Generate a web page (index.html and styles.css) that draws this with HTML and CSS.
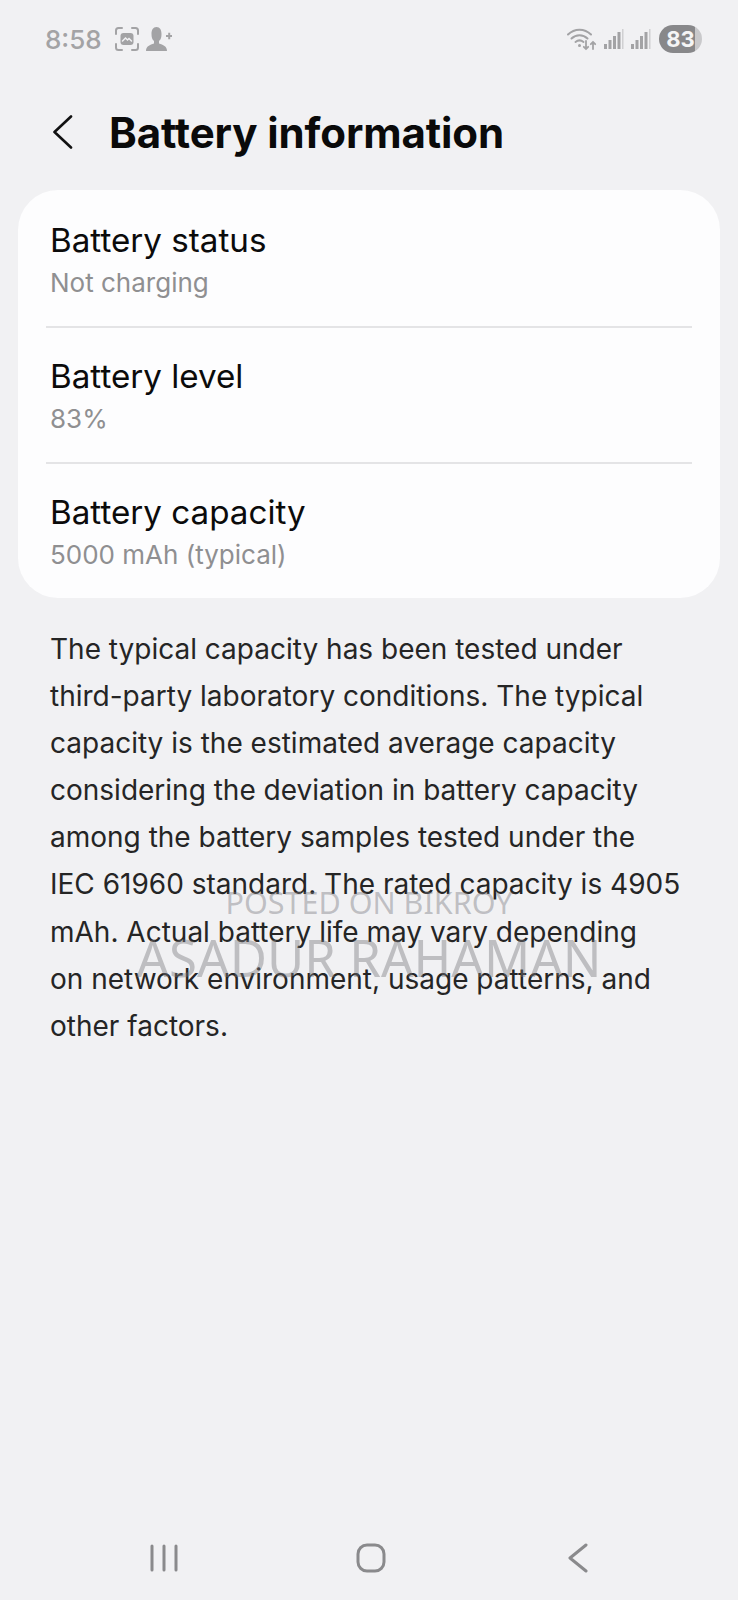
FILE: index.html
```html
<!DOCTYPE html>
<html>
<head>
    <title>Battery information</title>
    <link rel="stylesheet" href="styles.css">
</head>
<body>
    <div class="status-bar">
        <div class="status-left">
            <span class="time">8:58</span>
            <svg class="ic-shot" viewBox="0 0 26 26" width="26" height="26" fill="none" stroke="#a3a3a5" stroke-width="2" stroke-linecap="round">
                <path d="M2 8V4.500Q2 2 4.500 2H8M18 2H21.500Q24 2 24 4.500V8M24 18V21.500Q24 24 21.500 24H18M8 24H4.500Q2 24 2 21.500V18"/>
                <rect x="6.500" y="7" width="13" height="12" rx="3" fill="#a3a3a5" stroke="none"/>
                <path d="M8.500 15l3-3 2 2 1.500-1.500 2.500 2.500" stroke="#f1f1f3" stroke-width="1.500"/>
            </svg>
            <svg class="ic-user" viewBox="0 0 26 24" width="26" height="24" fill="#a3a3a5">
                <path d="M0 24C0 19 4 18 8 16.500V14C6 12.500 5.500 10 5.500 7 5.500 3 7 0 10.500 0S15.500 3 15.500 7C15.500 10 15 12.500 13 14V16.500C17 18 21 19 21 24Z"/>
                <path d="M20 8h2.200V5.800h2V8H26.200v2h-2v2.200h-2V10H20Z"/>
            </svg>
        </div>
        <div class="status-right">
            <svg viewBox="0 0 30 24" width="30" height="24" fill="none" stroke="#a3a3a5" stroke-width="2" stroke-linecap="round">
                <path d="M1 7.500C7.500 1 17.500 1 24 7.500"/>
                <path d="M4.500 11.500C9 7 16 7 20.500 11.500"/>
                <path d="M8.500 15C11 13 14 13 16.500 15"/>
                <circle cx="12.500" cy="18.500" r="1.500" fill="#a3a3a5" stroke="none"/>
                <path d="M19 14V22M16.800 19.800L19 22 21.200 19.800M26 22V15M23.800 17.200L26 15 28.200 17.200" stroke-width="1.800"/>
            </svg>
            <svg class="signal" viewBox="0 0 20 20" width="20" height="20" fill="#a3a3a5">
                <rect x="0" y="15" width="3" height="5"/>
                <rect x="4.500" y="11" width="3" height="9"/>
                <rect x="9" y="7" width="3" height="13"/>
                <rect x="13.500" y="3" width="3" height="17"/>
                <rect x="18" y="0" width="1.500" height="20" fill="#d0d0d2"/>
            </svg>
            <svg class="signal" viewBox="0 0 20 20" width="20" height="20" fill="#a3a3a5">
                <rect x="0" y="15" width="3" height="5"/>
                <rect x="4.500" y="11" width="3" height="9"/>
                <rect x="9" y="7" width="3" height="13"/>
                <rect x="13.500" y="3" width="3" height="17"/>
                <rect x="18" y="0" width="1.500" height="20" fill="#d0d0d2"/>
            </svg>
            <div class="battery"><span class="battery-num">83</span></div>
        </div>
    </div>

    <div class="header">
        <svg class="back" viewBox="0 0 22 34" width="22" height="34" fill="none" stroke="#111" stroke-width="2.600" stroke-linecap="round" stroke-linejoin="round">
            <path d="M19 1.500L2.500 17 19 32.500"/>
        </svg>
        <h1>Battery information</h1>
    </div>

    <div class="card">
        <div class="row">
            <div class="row-title">Battery status</div>
            <div class="row-sub">Not charging</div>
        </div>
        <div class="row">
            <div class="row-title">Battery level</div>
            <div class="row-sub">83%</div>
        </div>
        <div class="row">
            <div class="row-title">Battery capacity</div>
            <div class="row-sub">5000 mAh (typical)</div>
        </div>
    </div>

    <p class="note">The typical capacity has been tested under<br>third-party laboratory conditions. The typical<br>capacity is the estimated average capacity<br>considering the deviation in battery capacity<br>among the battery samples tested under the<br>IEC 61960 standard. The rated capacity is 4905<br>mAh. Actual battery life may vary depending<br>on network environment, usage patterns, and<br>other factors.</p>

    <div class="watermark">
        <div class="wm-small">POSTED ON BIKROY</div>
        <div class="wm-big">ASADUR RAHAMAN</div>
    </div>

    <div class="nav-bar">
        <svg viewBox="0 0 28 28" width="28" height="28" fill="none" stroke="#8a8a8c" stroke-width="3" stroke-linecap="round">
            <path d="M2 2V26M14 2V26M26 2V26"/>
        </svg>
        <svg class="nav-home" viewBox="0 0 30 30" width="30" height="30" fill="none" stroke="#8a8a8c" stroke-width="3">
            <rect x="2" y="2" width="26" height="26" rx="9"/>
        </svg>
        <svg viewBox="0 0 20 30" width="20" height="30" fill="none" stroke="#8a8a8c" stroke-width="3" stroke-linecap="round" stroke-linejoin="round">
            <path d="M18 2L2 15 18 28"/>
        </svg>
    </div>
</body>
</html>
```

FILE: styles.css
```css
body {
    font-family: "Inter", "Noto Sans", sans-serif;
    margin: 0;
    width: 738px;
    height: 1600px;
    background-color: #f1f1f3;
    position: relative;
    overflow: hidden;
    display: flex;
    flex-direction: column;
}

.status-bar {
    display: flex;
    justify-content: space-between;
    align-items: center;
    height: 30px;
    padding: 24px 36px 0 45px;
}

.status-left, .status-right {
    display: flex;
    align-items: center;
}

.time {
    font-size: 26px;
    font-weight: 500;
    color: #a3a3a5;
    margin-right: 12px;
}

.ic-user {
    margin-left: 6px;
}

.status-right .signal {
    margin-left: 7px;
}

.battery {
    width: 43px;
    height: 28px;
    margin-left: 8px;
    border-radius: 14px;
    background: linear-gradient(to right, #88888a 83%, #c9c9cb 83%);
    color: #f5f5f5;
    font-size: 22px;
    font-weight: 700;
    line-height: 28px;
    text-align: center;
}

.header {
    display: flex;
    align-items: center;
    margin-top: 53px;
    padding-left: 52px;
    height: 50px;
}

.back {
    margin-right: 35px;
}

h1 {
    font-size: 42px;
    font-weight: 700;
    color: #0a0a0a;
    margin: 0;
    letter-spacing: -0.1px;
}

.card {
    background-color: #fdfdfe;
    border-radius: 40px;
    margin: 33px 18px 0 18px;
    padding: 2px 28px 0 28px;
}

.row {
    height: 136px;
    box-sizing: border-box;
    padding: 29px 0 0 4px;
    margin: 0;
    border-bottom: 2px solid #e4e4e6;
}

.row:last-child {
    border-bottom: none;
    height: 134px;
}

.row-title {
    font-size: 33.200px;
    line-height: 38px;
    color: #0b0b0b;
}

.row-sub {
    font-size: 26px;
    line-height: 32px;
    margin-top: 8px;
    color: #8f8f91;
}

.note {
    margin: 28px 0 0 0;
    padding: 0 50px;
    font-size: 28px;
    line-height: 47.100px;
    color: #252525;
    white-space: nowrap;
}

.watermark {
    position: absolute;
    left: 0;
    top: 881px;
    width: 738px;
    text-align: center;
    color: rgba(120, 120, 125, 0.42);
    font-family: "Noto Sans", sans-serif;
}

.wm-small {
    font-size: 30.500px;
    line-height: 42px;
}

.wm-big {
    font-size: 51px;
    line-height: 68px;
}

.nav-bar {
    position: absolute;
    left: 0;
    bottom: 27px;
    width: 100%;
    display: flex;
    justify-content: space-between;
    align-items: center;
    box-sizing: border-box;
    padding: 0 150px 0 150px;
}

.nav-home {
    margin-right: 4px;
}
```
